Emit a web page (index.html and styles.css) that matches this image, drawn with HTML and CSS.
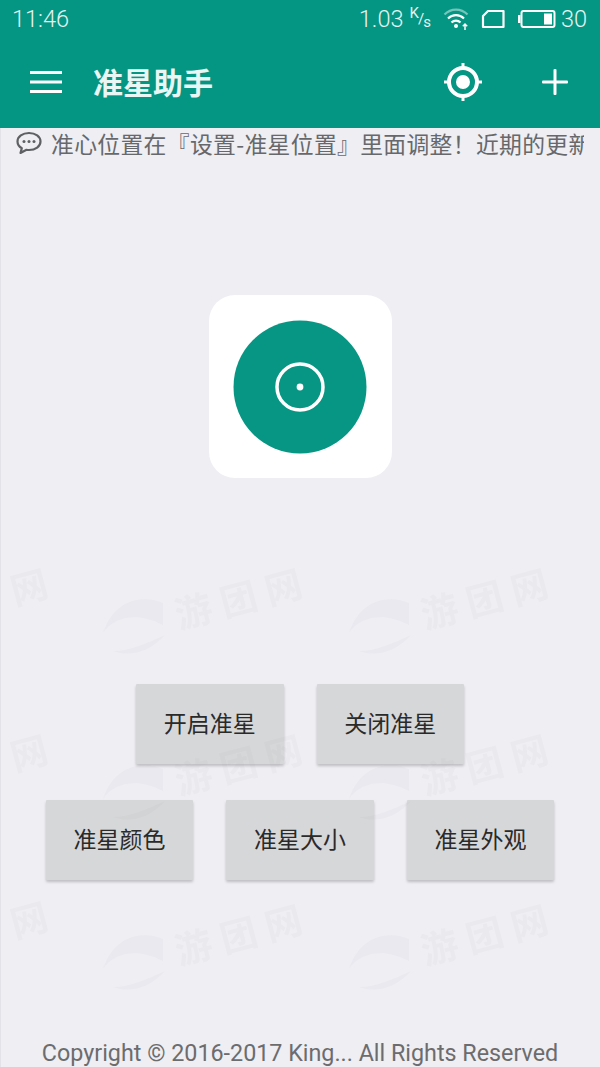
FILE: index.html
```html
<!DOCTYPE html>
<html lang="zh-CN">
<head>
  <meta charset="UTF-8" />
  <meta name="viewport" content="width=device-width, initial-scale=1" />
  <title>准星助手</title>
  <link rel="stylesheet" href="styles.css">
</head>
<body>
  <div class="screen">

    <!-- Status bar -->
    <div class="status-bar">
      <span class="clock">11:46</span>
      <div class="status-right">
        <span class="speed">1.03</span>
        <span class="speed-unit"><sup>K</sup>/<sub>s</sub></span>
        <svg class="wifi" width="26" height="24" viewBox="0 0 26 24" fill="none" stroke="#fff">
          <path d="M1.500 7.500C8 1 18 1 24.500 7.500" stroke-width="2.200" opacity="0.450"/>
          <path d="M5 11.500C9.500 7 16.500 7 21 11.500" stroke-width="2.200"/>
          <path d="M8.500 15.500C11 13 15 13 17.500 15.500" stroke-width="2.200"/>
          <circle cx="13" cy="19" r="2" fill="#fff" stroke="none"/>
          <path d="M22 23v-6M19.800 19.200L22 17l2.200 2.200" stroke-width="1.500"/>
        </svg>
        <svg class="sim" width="24" height="20" viewBox="0 0 24 20" fill="none" stroke="#fff" stroke-width="2.200">
          <path d="M7 2h15.500v16H2V7z" stroke-linejoin="round"/>
        </svg>
        <svg class="battery" width="38" height="20" viewBox="0 0 38 20">
          <rect x="0" y="6" width="2.500" height="8" fill="#fff"/>
          <rect x="3.500" y="2" width="33" height="16" rx="2" fill="none" stroke="#fff" stroke-width="2"/>
          <rect x="26" y="4.500" width="8" height="11" fill="#fff"/>
        </svg>
        <span class="level">30</span>
      </div>
    </div>

    <!-- Toolbar -->
    <header class="toolbar">
      <svg class="menu-icon" width="32" height="22" viewBox="0 0 32 22" fill="#fff">
        <rect y="0" width="32" height="3"/>
        <rect y="9.500" width="32" height="3"/>
        <rect y="19" width="32" height="3"/>
      </svg>
      <h1 class="title">准星助手</h1>
      <svg class="target-icon" width="40" height="40" viewBox="0 0 40 40" fill="none" stroke="#fff">
        <circle cx="20" cy="20" r="14" stroke-width="4"/>
        <circle cx="20" cy="20" r="7" fill="#fff" stroke="none"/>
        <path d="M20 1v6M20 33v6M1 20h6M33 20h6" stroke-width="3"/>
      </svg>
      <svg class="plus-icon" width="28" height="28" viewBox="0 0 28 28" fill="#fff">
        <rect x="12.500" y="1" width="3" height="26" rx="1"/>
        <rect x="1" y="12.500" width="26" height="3" rx="1"/>
      </svg>
    </header>

    <!-- Notice -->
    <div class="notice">
      <svg class="notice-icon" width="26" height="24" viewBox="0 0 26 24" fill="none" stroke="#5f6063" stroke-width="2.200">
        <path d="M13 2C6.500 2 1.500 5.600 1.500 10.500c0 2.800 1.700 5.200 4.300 6.800L4.500 22l6-3.200c.8.100 1.700.2 2.500.2 6.500 0 11.500-3.700 11.500-8.500S19.500 2 13 2z" stroke-linejoin="round"/>
        <circle cx="8" cy="10.500" r="1.500" fill="#5f6063" stroke="none"/>
        <circle cx="13" cy="10.500" r="1.500" fill="#5f6063" stroke="none"/>
        <circle cx="18" cy="10.500" r="1.500" fill="#5f6063" stroke="none"/>
      </svg>
      <div class="notice-text">准心位置在『设置-准星位置』里面调整！近期的更新内容</div>
    </div>

    <!-- Logo -->
    <div class="logo-wrap">
      <div class="logo">
        <svg width="134" height="134" viewBox="0 0 134 134">
          <circle cx="67" cy="67" r="66.500" fill="#089684"/>
          <circle cx="67" cy="67" r="23" fill="none" stroke="#fff" stroke-width="3.500"/>
          <circle cx="67" cy="67" r="3.400" fill="#fff"/>
        </svg>
      </div>
    </div>

    <!-- Buttons -->
    <div class="btn-rows">
      <div class="btn-row">
        <button class="btn">开启准星</button>
        <button class="btn">关闭准星</button>
      </div>
      <div class="btn-row">
        <button class="btn">准星颜色</button>
        <button class="btn">准星大小</button>
        <button class="btn">准星外观</button>
      </div>
    </div>

    <footer class="copyright">Copyright © 2016-2017 King... All Rights Reserved</footer>

    <!-- Watermark over the page -->
    <svg width="0" height="0" class="wm-defs">
      <symbol id="swoosh" viewBox="0 0 66 60">
        <path d="M62 6C44-2 14 0 2 36c10-16 34-22 60-8z"/>
        <path d="M64 38C48 56 28 60 12 54c18 0 34-8 52-16z"/>
      </symbol>
    </svg>
    <div class="wm wm-1"><span class="wm-text wm-single">网</span></div>
    <div class="wm wm-2"><svg class="wm-swoosh"><use href="#swoosh"/></svg><span class="wm-text">游 团 网</span></div>
    <div class="wm wm-3"><svg class="wm-swoosh"><use href="#swoosh"/></svg><span class="wm-text">游 团 网</span></div>
    <div class="wm wm-4"><span class="wm-text wm-single">网</span></div>
    <div class="wm wm-5"><svg class="wm-swoosh"><use href="#swoosh"/></svg><span class="wm-text">游 团 网</span></div>
    <div class="wm wm-6"><svg class="wm-swoosh"><use href="#swoosh"/></svg><span class="wm-text">游 团 网</span></div>
    <div class="wm wm-7"><span class="wm-text wm-single">网</span></div>
    <div class="wm wm-8"><svg class="wm-swoosh"><use href="#swoosh"/></svg><span class="wm-text">游 团 网</span></div>
    <div class="wm wm-9"><svg class="wm-swoosh"><use href="#swoosh"/></svg><span class="wm-text">游 团 网</span></div>
  </div>
</body>
</html>
```

FILE: styles.css
```css
body {
  margin: 0;
  padding: 0;
  font-family: "Noto Sans CJK SC", sans-serif;
}
.screen {
  position: relative;
  width: 600px;
  height: 1067px;
  overflow: hidden;
  background-color: #eeeef3;
  box-shadow: inset 1px 0 0 #e2e2e8;
  display: flex;
  flex-direction: column;
}
.status-bar {
  height: 38px;
  background-color: #059583;
  color: #e4f3f0;
  display: flex;
  align-items: center;
  justify-content: space-between;
  padding: 0 13px 0 12px;
  font-family: Roboto, sans-serif;
  font-size: 23.500px;
}
.clock,
.speed,
.level {
  font-weight: 300;
}
.status-right {
  display: flex;
  align-items: center;
}
.speed-unit {
  font-size: 15px;
  font-weight: 400;
  margin: 0 13px 0 6px;
  letter-spacing: -1px;
}
.speed-unit sup {
  vertical-align: 6px;
  font-size: 15px;
  line-height: 0;
}
.speed-unit sub {
  vertical-align: -3px;
  font-size: 15px;
  line-height: 0;
}
.sim {
  margin-left: 12px;
}
.battery {
  margin-left: 13px;
  margin-right: 5px;
}
.toolbar {
  height: 90px;
  background-color: #059583;
  display: flex;
  align-items: center;
  padding: 0 31px 2px 30px;
  box-sizing: border-box;
}
.menu-icon {
  flex: none;
}
.title {
  margin: 0 0 2px 31px;
  flex: 1;
  font-size: 30px;
  font-weight: 700;
  color: #e9f6f3;
}
.target-icon {
  margin-right: 58px;
}
.notice {
  height: 34px;
  display: flex;
  align-items: center;
  padding: 0 0 4px 16px;
  box-sizing: border-box;
}
.notice-icon {
  flex: none;
  margin-right: 9px;
}
.notice-text {
  width: 533px;
  overflow: hidden;
  white-space: nowrap;
  font-size: 22.800px;
  letter-spacing: 0.350px;
  color: #67686b;
}
.logo-wrap {
  display: flex;
  justify-content: center;
  padding-top: 133px;
}
.logo {
  width: 183px;
  height: 183px;
  background-color: #fff;
  border-radius: 26px;
  display: flex;
  align-items: center;
  justify-content: center;
}
.btn-rows {
  display: flex;
  flex-direction: column;
  gap: 36px;
  margin-top: 206px;
}
.btn-row {
  display: flex;
  justify-content: center;
  gap: 33px;
}
.btn {
  width: 147.500px;
  height: 80px;
  padding: 0 0 4px;
  border: none;
  border-radius: 1px;
  background-color: #d6d7d8;
  box-shadow: 0 2px 3px rgba(0,0,0,0.2);
  font-family: "Noto Sans CJK SC", sans-serif;
  font-size: 23px;
  color: #2a2a2a;
}
.copyright {
  margin-top: auto;
  padding-bottom: 1px;
  text-align: center;
  font-family: Roboto, sans-serif;
  font-size: 23.300px;
  line-height: 26px;
  color: #6c6c6e;
}
.wm-defs {
  position: absolute;
}
.wm {
  position: absolute;
  display: flex;
  align-items: center;
  gap: 6px;
  pointer-events: none;
  filter: blur(0.7px);
}
.wm-text {
  font-size: 37px;
  line-height: 46px;
  font-weight: 700;
  white-space: nowrap;
  word-spacing: 1px;
  color: rgba(120,120,135,0.04);
  transform: translateY(-30px) rotate(-15deg);
}
.wm-single {
  transform: rotate(-15deg);
}
.wm-swoosh {
  width: 66px;
  height: 60px;
  fill: rgba(120,120,135,0.035);
}
.wm-1 { left: 10px; top: 562px; }
.wm-2 { left: 101px; top: 597px; }
.wm-3 { left: 347px; top: 597px; }
.wm-4 { left: 10px; top: 728px; }
.wm-5 { left: 101px; top: 763px; }
.wm-6 { left: 347px; top: 763px; }
.wm-7 { left: 10px; top: 895px; }
.wm-8 { left: 101px; top: 933px; }
.wm-9 { left: 347px; top: 933px; }
```
